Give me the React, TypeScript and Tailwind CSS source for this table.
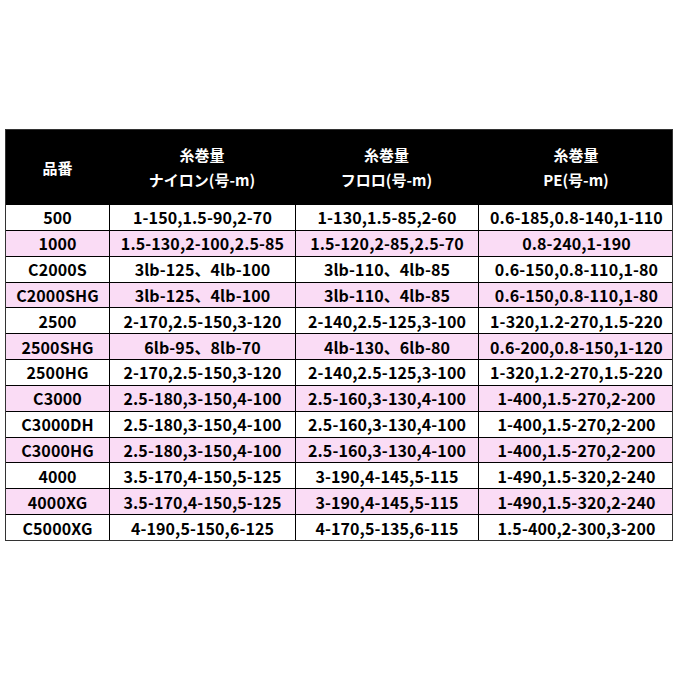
const rows: [string, string, string, string][] = [
  ['500', '1-150,1.5-90,2-70', '1-130,1.5-85,2-60', '0.6-185,0.8-140,1-110'],
  ['1000', '1.5-130,2-100,2.5-85', '1.5-120,2-85,2.5-70', '0.8-240,1-190'],
  ['C2000S', '3lb-125、4lb-100', '3lb-110、4lb-85', '0.6-150,0.8-110,1-80'],
  ['C2000SHG', '3lb-125、4lb-100', '3lb-110、4lb-85', '0.6-150,0.8-110,1-80'],
  ['2500', '2-170,2.5-150,3-120', '2-140,2.5-125,3-100', '1-320,1.2-270,1.5-220'],
  ['2500SHG', '6lb-95、8lb-70', '4lb-130、6lb-80', '0.6-200,0.8-150,1-120'],
  ['2500HG', '2-170,2.5-150,3-120', '2-140,2.5-125,3-100', '1-320,1.2-270,1.5-220'],
  ['C3000', '2.5-180,3-150,4-100', '2.5-160,3-130,4-100', '1-400,1.5-270,2-200'],
  ['C3000DH', '2.5-180,3-150,4-100', '2.5-160,3-130,4-100', '1-400,1.5-270,2-200'],
  ['C3000HG', '2.5-180,3-150,4-100', '2.5-160,3-130,4-100', '1-400,1.5-270,2-200'],
  ['4000', '3.5-170,4-150,5-125', '3-190,4-145,5-115', '1-490,1.5-320,2-240'],
  ['4000XG', '3.5-170,4-150,5-125', '3-190,4-145,5-115', '1-490,1.5-320,2-240'],
  ['C5000XG', '4-190,5-150,6-125', '4-170,5-135,6-115', '1.5-400,2-300,3-200'],
];

const cols = 'grid grid-cols-[103px_186px_183px_196px]';

export default function App() {
  return (
    <div className="w-[680px] h-[680px] bg-white pt-[129px] pl-[5px] font-['Noto_Sans_CJK_JP',sans-serif] font-bold text-black">
      <div className="w-[668px] border border-[#333]">
        {/* header */}
        <div className={`${cols} h-[74px] bg-black text-white text-[15px] leading-[25px]`}>
          <div className="flex items-center justify-center">品番</div>
          <div className="flex flex-col items-center justify-center">
            <span>糸巻量</span>
            <span>ナイロン(号-m)</span>
          </div>
          <div className="flex flex-col items-center justify-center">
            <span>糸巻量</span>
            <span>フロロ(号-m)</span>
          </div>
          <div className="flex flex-col items-center justify-center">
            <span>糸巻量</span>
            <span>PE(号-m)</span>
          </div>
        </div>
        {rows.map((r, i) => (
          <div
            key={r[0]}
            className={`${cols} h-[25.85px] border-t border-black text-[16px] tracking-[0.1px] ${i % 2 === 1 ? 'bg-[#fadcf5]' : 'bg-white'}`}
          >
            {r.map((c, j) => (
              <div
                key={j}
                className={`flex items-center justify-center leading-none ${j > 0 ? 'border-l border-black' : ''}`}
              >
                {c}
              </div>
            ))}
          </div>
        ))}
      </div>
    </div>
  );
}
